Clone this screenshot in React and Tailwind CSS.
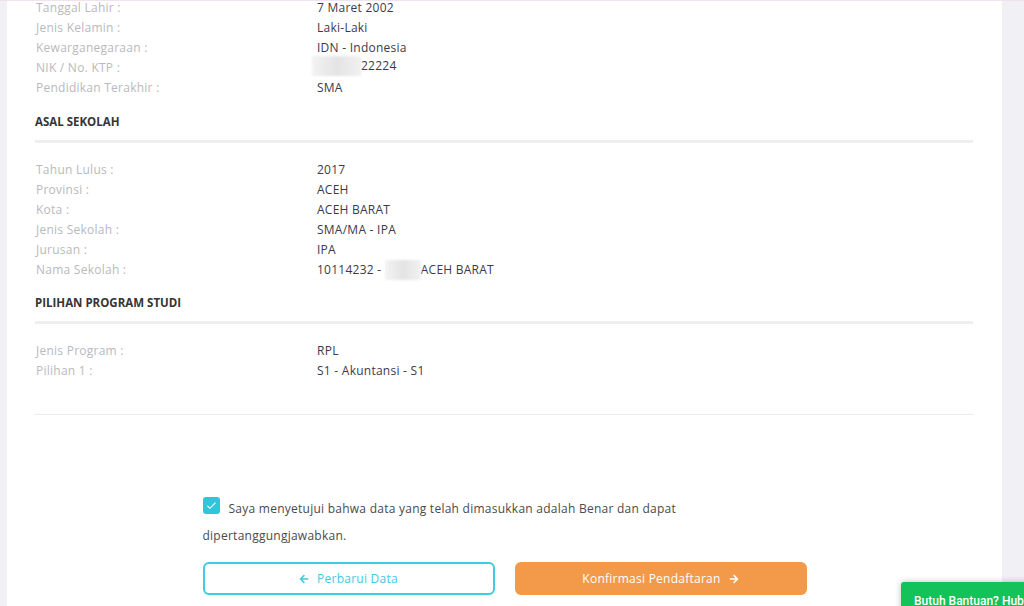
import React from 'react';
import { FaArrowLeft, FaArrowRight } from 'react-icons/fa';

const font = { fontFamily: '"Open Sans", "Liberation Sans", sans-serif' };

const Row = ({ label, children }) => (
    <div className="flex h-5 items-center text-[12px] tracking-[0.25px]">
        <div className="w-[282px] pl-px text-[#b9b9bd]">{label}</div>
        <div className="text-[#3b3a4a]">{children}</div>
    </div>
);

const Blur = ({ w }) => (
    <span className={`inline-block h-[20px] ${w} align-middle bg-gradient-to-r from-[#f3f3f3] via-[#e4e4e6] to-[#f1f1f1] blur-[1px]`} />
);

const Heading = ({ children }) => (
    <div className="flex h-5 items-center text-[11.5px] font-bold text-[#353535]">{children}</div>
);

const App = () => {
    return (
        <div className="relative h-[606px] w-[1024px] overflow-hidden bg-[#f1f1f5]" style={font}>
            <div className="h-px w-full bg-[#eee3ee]" />
            <div className="flex h-full">
                <div className="w-[7px] shrink-0 bg-[#f1f1f5]" />
                <div className="w-[995px] bg-white px-7">
                    <div className="mt-[-3px] flex flex-col">
                        <Row label="Tanggal Lahir :">7 Maret 2002</Row>
                        <Row label="Jenis Kelamin :">Laki-Laki</Row>
                        <Row label="Kewarganegaraan :">IDN - Indonesia</Row>
                        <Row label="NIK / No. KTP :">
                            <span className="-ml-[5px] inline-flex items-center">
                                <Blur w="w-[49px]" />
                                <span>22224</span>
                            </span>
                        </Row>
                        <Row label="Pendidikan Terakhir :">SMA</Row>
                    </div>

                    <div className="mt-[14px]">
                        <Heading>ASAL SEKOLAH</Heading>
                    </div>
                    <div className="mt-2 h-[3px] w-[938px] bg-[#efefef]" />

                    <div className="mt-[17px] flex flex-col">
                        <Row label="Tahun Lulus :">2017</Row>
                        <Row label="Provinsi :">ACEH</Row>
                        <Row label="Kota :">ACEH BARAT</Row>
                        <Row label="Jenis Sekolah :">SMA/MA - IPA</Row>
                        <Row label="Jurusan :">IPA</Row>
                        <Row label="Nama Sekolah :">
                            <span className="inline-flex items-center">
                                <span>10114232 -&nbsp;</span>
                                <Blur w="w-[36px]" />
                                <span>ACEH BARAT</span>
                            </span>
                        </Row>
                    </div>

                    <div className="mt-[13px]">
                        <Heading>PILIHAN PROGRAM STUDI</Heading>
                    </div>
                    <div className="mt-2 h-[3px] w-[938px] bg-[#efefef]" />

                    <div className="mt-[17px] flex flex-col">
                        <Row label="Jenis Program :">RPL</Row>
                        <Row label="Pilihan 1 :">S1 - Akuntansi - S1</Row>
                    </div>

                    <div className="mt-[33px] h-px w-[938px] bg-[#ececec]" />

                    <div className="mx-auto mt-[80px] w-[604px] text-[12px] tracking-[0.25px]">
                        <div className="flex items-start">
                            <span className="mt-[2px] flex h-[17px] w-[17px] shrink-0 items-center justify-center rounded-[3px] bg-[#31c5d9]">
                                <svg viewBox="0 0 16 16" className="h-[13px] w-[13px]" fill="none" stroke="white" strokeWidth="1.3">
                                    <path d="M3 8.5l3 3 7-7" />
                                </svg>
                            </span>
                            <span className="ml-[9px] leading-[27px] text-[#4a4a4a]">
                                Saya menyetujui bahwa data yang telah dimasukkan adalah Benar dan dapat
                            </span>
                        </div>
                        <div className="leading-[27px] text-[#4a4a4a]">dipertanggungjawabkan.</div>

                        <div className="mt-[13px] flex gap-5">
                            <button
                                type="button"
                                className="flex h-[33px] w-[292px] items-center justify-center gap-2 rounded-md border-2 border-[#3fcbe0] bg-white text-[#3fcbe0]"
                            >
                                <FaArrowLeft className="h-[10px] w-[10px]" />
                                Perbarui Data
                            </button>
                            <button
                                type="button"
                                className="flex h-[33px] w-[292px] items-center justify-center gap-2 rounded-md bg-[#f29a4a] text-white"
                            >
                                Konfirmasi Pendaftaran
                                <FaArrowRight className="h-[10px] w-[10px]" />
                            </button>
                        </div>
                    </div>
                </div>
                <div className="flex-1 bg-[#f1f1f5]" />
            </div>

            <div
                className="absolute left-[901px] top-[582px] h-[40px] w-[160px] rounded-t-[3px] bg-[#14c25a] pl-[13px] pt-[10px] text-[12px] font-medium whitespace-nowrap text-white shadow-[0_0_6px_rgba(0,0,0,0.25)]"
                style={{ fontFamily: 'Roboto, "Liberation Sans", sans-serif' }}
            >
                Butuh Bantuan? Hubungi Kami
            </div>
        </div>
    );
};

export default App;
